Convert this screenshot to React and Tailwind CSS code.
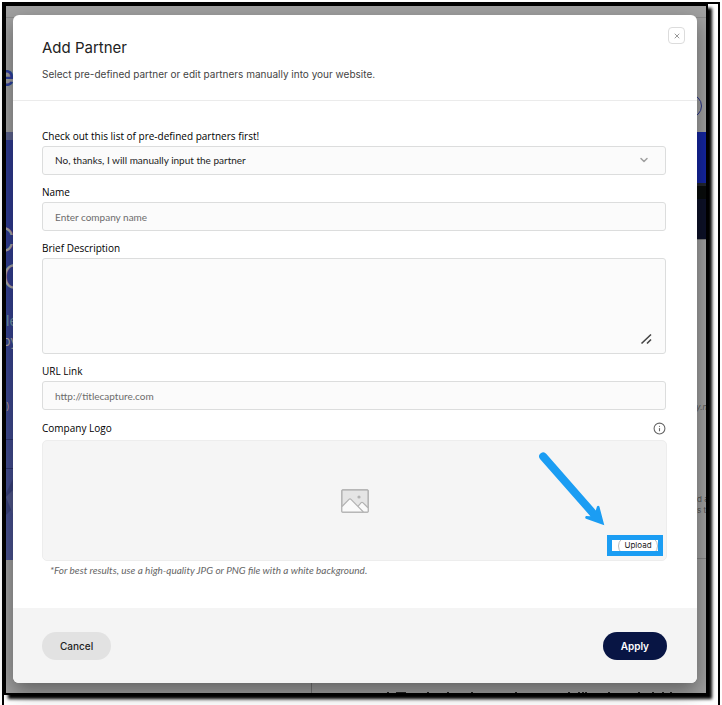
import React, { useState } from "react";
import { ChevronDown, Info, X } from "lucide-react";

const fieldClass =
  "block w-full rounded-[3px] border border-[#dcdddd] bg-[#fbfbfb] px-3 font-['Lato',sans-serif] text-[10px] text-[#222] placeholder:text-[#6c6c6c] outline-none focus:border-[#9a9a9a]";

const labelClass = "font-['Open_Sans',sans-serif] text-[10px] leading-4 font-medium text-black";

const Field = ({ id, label, children }) => (
  <div>
    <label htmlFor={id} className={`mb-[2px] block ${labelClass}`}>
      {label}
    </label>
    {children}
  </div>
);

// Dimmed website that stays visible around the dialog
const PageBehind = () => (
  <div aria-hidden="true" className="absolute inset-0 flex flex-col overflow-hidden bg-[#a0a0a0]">
    <div className="h-3 shrink-0 border-b border-[#8c8c8c]" />
    <div className="relative h-[114px] shrink-0">
      <span className="absolute -left-2 top-[38px] text-[28px] leading-10 font-medium text-[#2f40a0]">e</span>
      <div className="absolute right-1 top-[76px] h-6 w-20 rounded-full border border-[#26318a]" />
    </div>
    <div className="flex h-[428px] shrink-0 justify-between">
      <div className="relative w-8 overflow-hidden bg-[#5d648f]">
        <div className="mt-2 h-full rounded-tr-lg bg-linear-to-b from-[#2f3b92] from-20% to-[#4c5490]" />
        <span className="absolute -left-4 top-[88px] text-[34px] leading-10 font-light text-[#aaa6a6]">C</span>
        <span className="absolute -left-1 top-[125px] text-[34px] leading-10 font-light text-[#aaa6a6]">G</span>
        <span className="absolute left-0 top-[181px] text-[14px] leading-4 text-[#7098a8]">le</span>
        <span className="absolute -left-1 top-[201px] text-[14px] leading-4 text-[#aaa6a6]">by</span>
        <span className="absolute left-0 top-[266px] text-[10px] leading-4 text-[#b79a88]">)</span>
        <div className="absolute inset-x-0 top-[307px] h-[30px] border-y border-[#2d356e]" />
        <svg className="absolute left-0 top-[345px]" width="8" height="60" viewBox="0 0 8 60">
          <path d="M8 0 0 16v22l8-8z" fill="#3a427c" />
          <path d="M0 20 8 12v28z" fill="#50578b" />
        </svg>
      </div>
      <div className="w-8">
        <div className="h-[51px] bg-[#1425a0]" />
        <div className="h-[3px] bg-[#22262c]" />
        <div className="h-[13px] bg-[#090c0c]" />
        <div className="h-10 bg-[#0d1128]" />
        <div className="relative h-[320px] border-t border-[#777] text-[8px] leading-[11px] whitespace-nowrap text-[#555]">
          <span className="absolute left-[22px] top-[162px] italic">y.n</span>
          <span className="absolute left-[23px] top-[254px]">
            d a<br />s to
          </span>
          <div className="absolute inset-x-0 bottom-0 border-b border-[#848484]" />
        </div>
      </div>
    </div>
    <div className="relative flex-1">
      <div className="absolute left-[305px] h-full border-l border-[#777]" />
      <svg className="absolute bottom-0 right-0" width="320" height="1" viewBox="0 0 320 1">
        <path
          d="M1 .5h2M10 .5h10M41 .5h2M61 .5h2M85 .5h2M129 .5h2M182 .5h2M192 .5h2M196 .5h2M199 .5h2M222 .5h2M252 .5h2M266 .5h2M276 .5h2M284 .5h2"
          stroke="#222"
        />
      </svg>
    </div>
  </div>
);

const ImagePlaceholder = () => (
  <svg width="28" height="24" viewBox="0 0 28 24" fill="none" stroke="#b2b2b2" aria-hidden="true">
    <rect x="0.8" y="0.8" width="26.4" height="22.4" rx="1" fill="#e5e5e5" />
    <path d="M1 17.5 8 10.3q1-1 2 0L22.4 23H1z" fill="#fafafa" stroke="none" />
    <path d="m17 17.3 3.2-3.6q.8-.8 1.6 0l5.2 5V23h-4.6z" fill="#fafafa" stroke="none" />
    <path d="M1 17.5 8 10.3q1-1 2 0L22.4 23M17 17.3l3.2-3.6q.8-.8 1.6 0l5.2 5" strokeWidth="1.2" />
    <rect x="0.8" y="0.8" width="26.4" height="22.4" rx="1" strokeWidth="1.2" />
    <circle cx="18" cy="8" r="1.6" fill="#b2b2b2" stroke="none" />
  </svg>
);

const UploadArrow = () => (
  <svg className="absolute right-[60px] top-[10px]" width="68" height="78" viewBox="0 0 68 78" aria-hidden="true">
    <path
      d="M2 8A4 4 0 0 1 8.4 3L57.8 59.4 59 55.4q1.3-1.2 2.4.2L66.3 74.3 48 67.8q-1.6-1.4 0-2.8l4.4.2z"
      fill="#1b9df3"
    />
  </svg>
);

const AddPartner = () => {
  const [partner, setPartner] = useState("manual");

  return (
    <form
      role="dialog"
      aria-labelledby="dialog-title"
      onSubmit={(e) => e.preventDefault()}
      className="relative mt-[9px] mr-[9px] mb-[10px] ml-[7px] overflow-hidden rounded-md bg-white shadow-[0_8px_20px_rgba(0,0,0,0.4)]"
    >
      <header className="flex items-start justify-between border-b border-[#ebebeb] pt-3 pr-3 pb-[18px] pl-[29px]">
        <div className="pt-[9px]">
          <h1 id="dialog-title" className="text-[15px] leading-6 text-[#222]">Add Partner</h1>
          <p className="mt-[6px] text-[10px] leading-4 text-[#444]">
            Select pre-defined partner or edit partners manually into your website.
          </p>
        </div>
        <button
          type="button"
          aria-label="Close"
          className="flex size-[17px] items-center justify-center rounded-[4px] border border-[#dcdcdc] text-[#999]"
        >
          <X size={8} strokeWidth={3} />
        </button>
      </header>

      <div className="flex flex-col gap-[9px] pt-[27px] pr-[31px] pb-[30px] pl-[29px]">
        <Field id="partner" label="Check out this list of pre-defined partners first!">
          <div className="relative">
            <select
              id="partner"
              value={partner}
              onChange={(e) => setPartner(e.target.value)}
              className={`${fieldClass} h-[29px] appearance-none`}
            >
              <option value="manual">No, thanks, I will manually input the partner</option>
            </select>
            <ChevronDown
              size={12}
              strokeWidth={3}
              className="pointer-events-none absolute right-4 top-2 text-[#a0a0a0]"
            />
          </div>
        </Field>

        <Field id="name" label="Name">
          <input id="name" type="text" placeholder="Enter company name" className={`${fieldClass} h-[29px]`} />
        </Field>

        <Field id="description" label="Brief Description">
          <div className="relative">
            <textarea id="description" className={`${fieldClass} h-24 resize-none py-2`} />
            <svg
              className="pointer-events-none absolute bottom-2 right-3"
              width="14"
              height="14"
              viewBox="0 0 14 14"
              stroke="#444"
              strokeWidth="1.6"
              aria-hidden="true"
            >
              <path d="M1.5 11.5 11 2.5M7 11.5l4-4" />
            </svg>
          </div>
        </Field>

        <Field id="url" label="URL Link">
          <input id="url" type="url" placeholder="http://titlecapture.com" className={`${fieldClass} h-[29px]`} />
        </Field>

        <section className="-mr-px pt-px">
          <div className="mb-1 flex items-center justify-between pr-px">
            <h2 className={labelClass}>Company Logo</h2>
            <Info size={13} className="text-[#666]" />
          </div>
          <div className="relative flex h-[121px] items-center justify-center rounded-[5px] border border-[#ededed] bg-[#f5f5f5]">
            <ImagePlaceholder />
            <UploadArrow />
            <div className="absolute bottom-1 right-[3px] flex h-[21px] w-14 items-center justify-end overflow-hidden border-[5px] border-[#1b9df3] bg-white">
              <button
                type="button"
                className="flex h-5 w-10 shrink-0 items-center justify-center rounded-full border border-[#bbb] bg-white pb-[2px] text-[8px] leading-3 text-[#222]"
              >
                Upload
              </button>
            </div>
          </div>
          <p className="mt-px ml-2 font-['Lato',sans-serif] text-[10px] leading-4 text-[#666] italic">
            *For best results, use a high-quality JPG or PNG file with a white background.
          </p>
        </section>
      </div>

      <footer className="flex items-center justify-between bg-[#f4f4f4] pt-6 pr-[30px] pb-[23px] pl-[29px]">
        <button type="button" className="h-7 rounded-full bg-[#e2e2e2] px-[18px] text-[10px] font-medium text-[#222]">
          Cancel
        </button>
        <button type="submit" className="h-7 rounded-full bg-[#081544] px-[18px] text-[10px] font-semibold text-white">
          Apply
        </button>
      </footer>
    </form>
  );
};

export default function App() {
  return (
    <div className="h-screen overflow-hidden bg-white px-[2px] pt-[2px] font-['Inter',sans-serif]">
      <div className="min-h-full border-x-2 border-t-2 border-black pr-[10px]">
        <div className="relative border-2 border-black shadow-[4px_4px_3px_#000]">
          <PageBehind />
          <div className="relative flow-root">
            <AddPartner />
          </div>
        </div>
      </div>
    </div>
  );
}
